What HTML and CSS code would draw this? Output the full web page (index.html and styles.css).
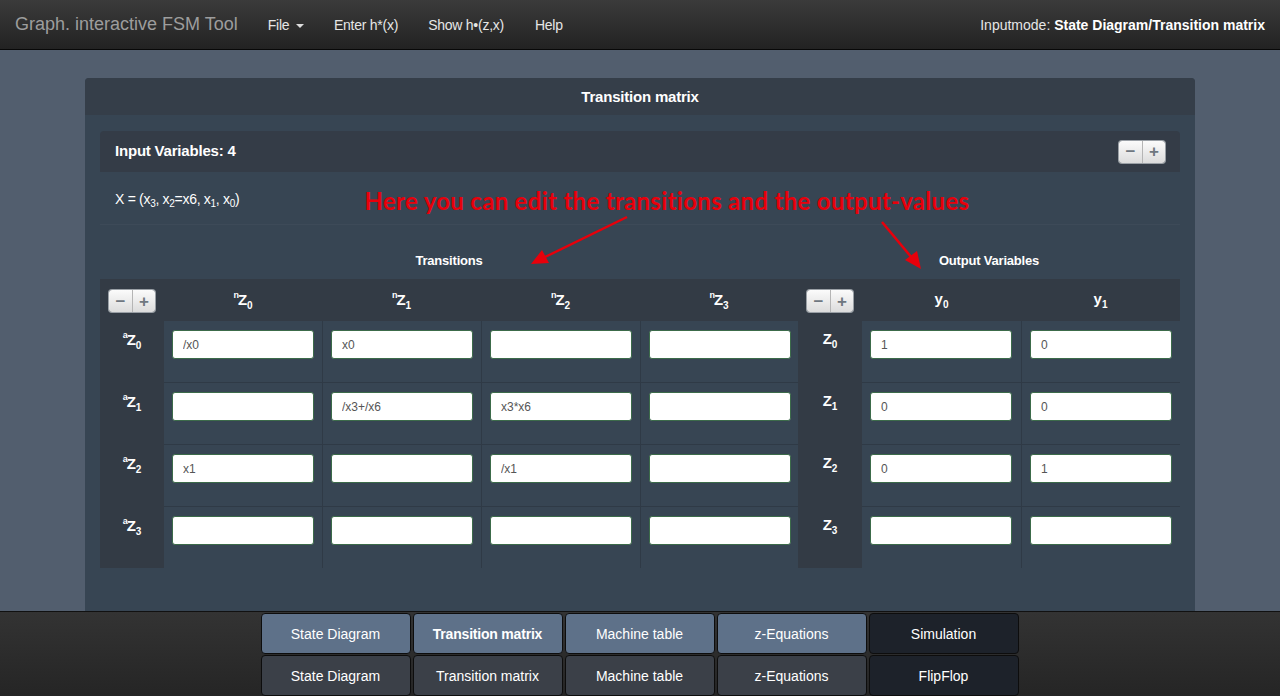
FILE: index.html
```html
<!DOCTYPE html>
<html>
<head>
<meta charset="utf-8">
<title>Graph. interactive FSM Tool</title>
<link rel="stylesheet" href="styles.css">
</head>
<body>
<div class="app">
  <nav class="navbar">
    <div class="brand">Graph. interactive FSM Tool</div>
    <ul class="nav">
      <li>File <span class="caret"></span></li>
      <li>Enter h*(x)</li>
      <li>Show h•(z,x)</li>
      <li>Help</li>
    </ul>
    <div class="mode">Inputmode: <b>State Diagram/Transition matrix</b></div>
  </nav>

  <main class="main">
    <section class="panel">
      <header class="panel-head">Transition matrix</header>
      <div class="panel-body">
        <div class="inputs-bar">
          <span class="inputs-title">Input Variables: 4</span>
          <span class="pm"><span class="pm-btn">&minus;</span><span class="pm-btn">+</span></span>
        </div>
        <div class="xvec">X = (x<sub>3</sub>, x<sub>2</sub>=x6, x<sub>1</sub>, x<sub>0</sub>)</div>

        <div class="note">Here you can edit the transitions and the output-values</div>
        <svg class="arrows" width="1280" height="300" viewBox="0 0 1280 300">
          <g stroke="#e8000b" stroke-width="2.5" fill="#e8000b">
            <line x1="627" y1="17" x2="545" y2="57"/>
            <polygon points="531,64 542,50 549,63" stroke="none"/>
            <line x1="882" y1="22" x2="912" y2="58"/>
            <polygon points="921,69 905,60 917,51" stroke="none"/>
          </g>
        </svg>

        <div class="matrix">
          <div class="group-title span-trans">Transitions</div>
          <div class="group-title span-out">Output Variables</div>

          <div class="hcell rh"><span class="pm small"><span class="pm-btn">&minus;</span><span class="pm-btn">+</span></span></div>
          <div class="hcell"><span class="lbl"><sup>n</sup>Z<sub>0</sub></span></div>
          <div class="hcell"><span class="lbl"><sup>n</sup>Z<sub>1</sub></span></div>
          <div class="hcell"><span class="lbl"><sup>n</sup>Z<sub>2</sub></span></div>
          <div class="hcell"><span class="lbl"><sup>n</sup>Z<sub>3</sub></span></div>
          <div class="hcell rh"><span class="pm small"><span class="pm-btn">&minus;</span><span class="pm-btn">+</span></span></div>
          <div class="hcell"><span class="lbl">y<sub>0</sub></span></div>
          <div class="hcell"><span class="lbl">y<sub>1</sub></span></div>

          <div class="rcell"><span class="lbl"><sup>a</sup>Z<sub>0</sub></span></div>
          <div class="dcell"><input value="/x0"></div>
          <div class="dcell"><input value="x0"></div>
          <div class="dcell"><input value=""></div>
          <div class="dcell"><input value=""></div>
          <div class="rcell"><span class="lbl">Z<sub>0</sub></span></div>
          <div class="dcell"><input value="1"></div>
          <div class="dcell"><input value="0"></div>

          <div class="rcell"><span class="lbl"><sup>a</sup>Z<sub>1</sub></span></div>
          <div class="dcell"><input value=""></div>
          <div class="dcell"><input value="/x3+/x6"></div>
          <div class="dcell"><input value="x3*x6"></div>
          <div class="dcell"><input value=""></div>
          <div class="rcell"><span class="lbl">Z<sub>1</sub></span></div>
          <div class="dcell"><input value="0"></div>
          <div class="dcell"><input value="0"></div>

          <div class="rcell"><span class="lbl"><sup>a</sup>Z<sub>2</sub></span></div>
          <div class="dcell"><input value="x1"></div>
          <div class="dcell"><input value=""></div>
          <div class="dcell"><input value="/x1"></div>
          <div class="dcell"><input value=""></div>
          <div class="rcell"><span class="lbl">Z<sub>2</sub></span></div>
          <div class="dcell"><input value="0"></div>
          <div class="dcell"><input value="1"></div>

          <div class="rcell last"><span class="lbl"><sup>a</sup>Z<sub>3</sub></span></div>
          <div class="dcell last"><input value=""></div>
          <div class="dcell last"><input value=""></div>
          <div class="dcell last"><input value=""></div>
          <div class="dcell last"><input value=""></div>
          <div class="rcell last"><span class="lbl">Z<sub>3</sub></span></div>
          <div class="dcell last"><input value=""></div>
          <div class="dcell last"><input value=""></div>
        </div>
      </div>
    </section>
  </main>

  <footer class="footer">
    <div class="tabs">
      <div class="tab blue">State Diagram</div>
      <div class="tab blue active">Transition matrix</div>
      <div class="tab blue">Machine table</div>
      <div class="tab blue">z-Equations</div>
      <div class="tab dark">Simulation</div>
      <div class="tab gray">State Diagram</div>
      <div class="tab gray">Transition matrix</div>
      <div class="tab gray">Machine table</div>
      <div class="tab gray">z-Equations</div>
      <div class="tab dark">FlipFlop</div>
    </div>
  </footer>
</div>
</body>
</html>
```

FILE: styles.css
```css
* { box-sizing: border-box; }
html, body { margin: 0; padding: 0; height: 100%; }
body {
  font-family: "Liberation Sans", Arial, sans-serif;
  font-size: 14px;
  color: #fff;
  background: #525e6e;
  overflow: hidden;
}
.app { display: flex; flex-direction: column; height: 100vh; }

/* navbar */
.navbar {
  flex: 0 0 50px;
  display: flex;
  align-items: center;
  padding: 0 15px;
  background: linear-gradient(#3b3b3b, #222);
  border-bottom: 1px solid #080808;
}
.brand { font-size: 18px; color: #9d9d9d; margin-right: 15px; }
.nav { list-style: none; margin: 0; padding: 0; display: flex; }
.nav li { padding: 0 15px; color: #e6e6e6; font-size: 14px; letter-spacing: -0.25px; }
.nav li:nth-child(3) { padding-right: 16px; }
.caret {
  display: inline-block; width: 0; height: 0; margin-left: 3px; vertical-align: middle;
  border-top: 4px solid #ddd; border-left: 4px solid transparent; border-right: 4px solid transparent;
}
.mode { margin-left: auto; color: #e6e6e6; font-size: 14px; }
.mode b { color: #fff; }

/* main */
.main { flex: 1; overflow: hidden; padding: 28px 85px 0; }
.panel {
  background: #374553;
  border-radius: 4px 4px 0 0;
  min-height: 100%;
  height: 600px;
}
.panel-head {
  height: 37px;
  background: #353e49;
  border-radius: 4px 4px 0 0;
  text-align: center;
  font-weight: bold;
  font-size: 15px;
  line-height: 37px;
  letter-spacing: -0.2px;
}
.panel-body { position: relative; padding: 16px 15px 0; }
.inputs-bar {
  height: 41px;
  background: #343c47;
  border-radius: 4px 4px 0 0;
  display: flex;
  align-items: center;
  justify-content: space-between;
  padding: 0 15px 2px;
}
.inputs-title { font-weight: bold; font-size: 15px; letter-spacing: -0.2px; }
.pm {
  display: inline-flex;
  height: 22px;
  border-radius: 3px;
  overflow: hidden;
  box-shadow: 0 0 0 1px #9aa0a6;
}
.inputs-bar .pm { margin-top: 2px; }
.pm-btn {
  width: 23px;
  display: flex; align-items: center; justify-content: center;
  background: linear-gradient(#fbfbfb, #dcdcdc);
  color: #6f7780;
  font-weight: bold;
  font-size: 17px;
  line-height: 1;
}
.pm-btn + .pm-btn { border-left: 1px solid #b5b5b5; }
.xvec {
  height: 53px;
  padding: 19px 15px 0;
  font-size: 14px;
  letter-spacing: -0.3px;
  border-bottom: 1px solid #3d4a58;
}
.xvec sub { font-size: 10px; vertical-align: -3px; }

.note {
  position: absolute;
  left: 0; right: 0;
  top: 71px;
  text-align: center;
  padding-left: 54px;
  color: #e8000b;
  font-family: "Lato", sans-serif;
  font-weight: bold;
  font-size: 24px;
  letter-spacing: 0.3px;
}
.arrows { position: absolute; left: -85px; top: 85px; pointer-events: none; }

/* matrix */
.matrix {
  display: grid;
  grid-template-columns: 64px 158px 159px 159px 158px 64px 159px 159px;
  grid-template-rows: 54px 42px 62px 62px 62px 61px;
}
.group-title {
  font-weight: bold; font-size: 13px; text-align: center;
  padding-top: 28px;
  letter-spacing: -0.2px;
}
.span-trans { grid-column: 1 / 6; }
.span-out { grid-column: 6 / 9; }
.hcell {
  background: #333b45;
  display: flex; justify-content: center;
  padding-top: 11px;
}
.pm.small { height: 22px; }
.lbl { font-weight: bold; font-size: 15px; position: relative; }
.lbl sup { font-size: 9px; vertical-align: 7px; margin-right: -1px; }
.lbl sub { font-size: 10px; vertical-align: -4px; }
.hcell .lbl { padding-top: 0; }
.rcell {
  background: #333b45;
  text-align: center;
  padding-top: 9px;
}
.dcell {
  background: #374553;
  padding: 9px 8px 0;
  border-left: 1px solid #2f3a46;
  border-bottom: 1px solid #2f3a46;
}
.rcell + .dcell { border-left: none; }
.dcell.last { border-bottom: none; }
.dcell input {
  display: block;
  width: 142px;
  height: 29px;
  border: 1px solid #3c6b4a;
  border-radius: 3px;
  background: #fff;
  padding: 0 10px;
  font-family: "Liberation Sans", Arial, sans-serif;
  font-size: 12px;
  color: #555;
  outline: none;
}

/* footer */
.footer {
  flex: 0 0 85px;
  background: linear-gradient(#333, #252525);
  border-top: 1px solid #111;
  display: flex;
  justify-content: center;
  padding-right: 1px;
}
.tabs {
  display: grid;
  grid-template-columns: repeat(5, 150px);
  grid-template-rows: 41px 41px;
  column-gap: 2px;
  row-gap: 1px;
  padding-top: 1px;
}
.tab {
  border: 1px solid #0d0d0d;
  border-radius: 4px;
  display: flex; align-items: center; justify-content: center;
  font-size: 14px;
  color: #fff;
}
.tab.blue { background: #5e7189; }
.tab.gray { background: #3b4048; }
.tab.dark { background: #1d222a; }
.tab.active { font-weight: bold; letter-spacing: -0.2px; }
```
